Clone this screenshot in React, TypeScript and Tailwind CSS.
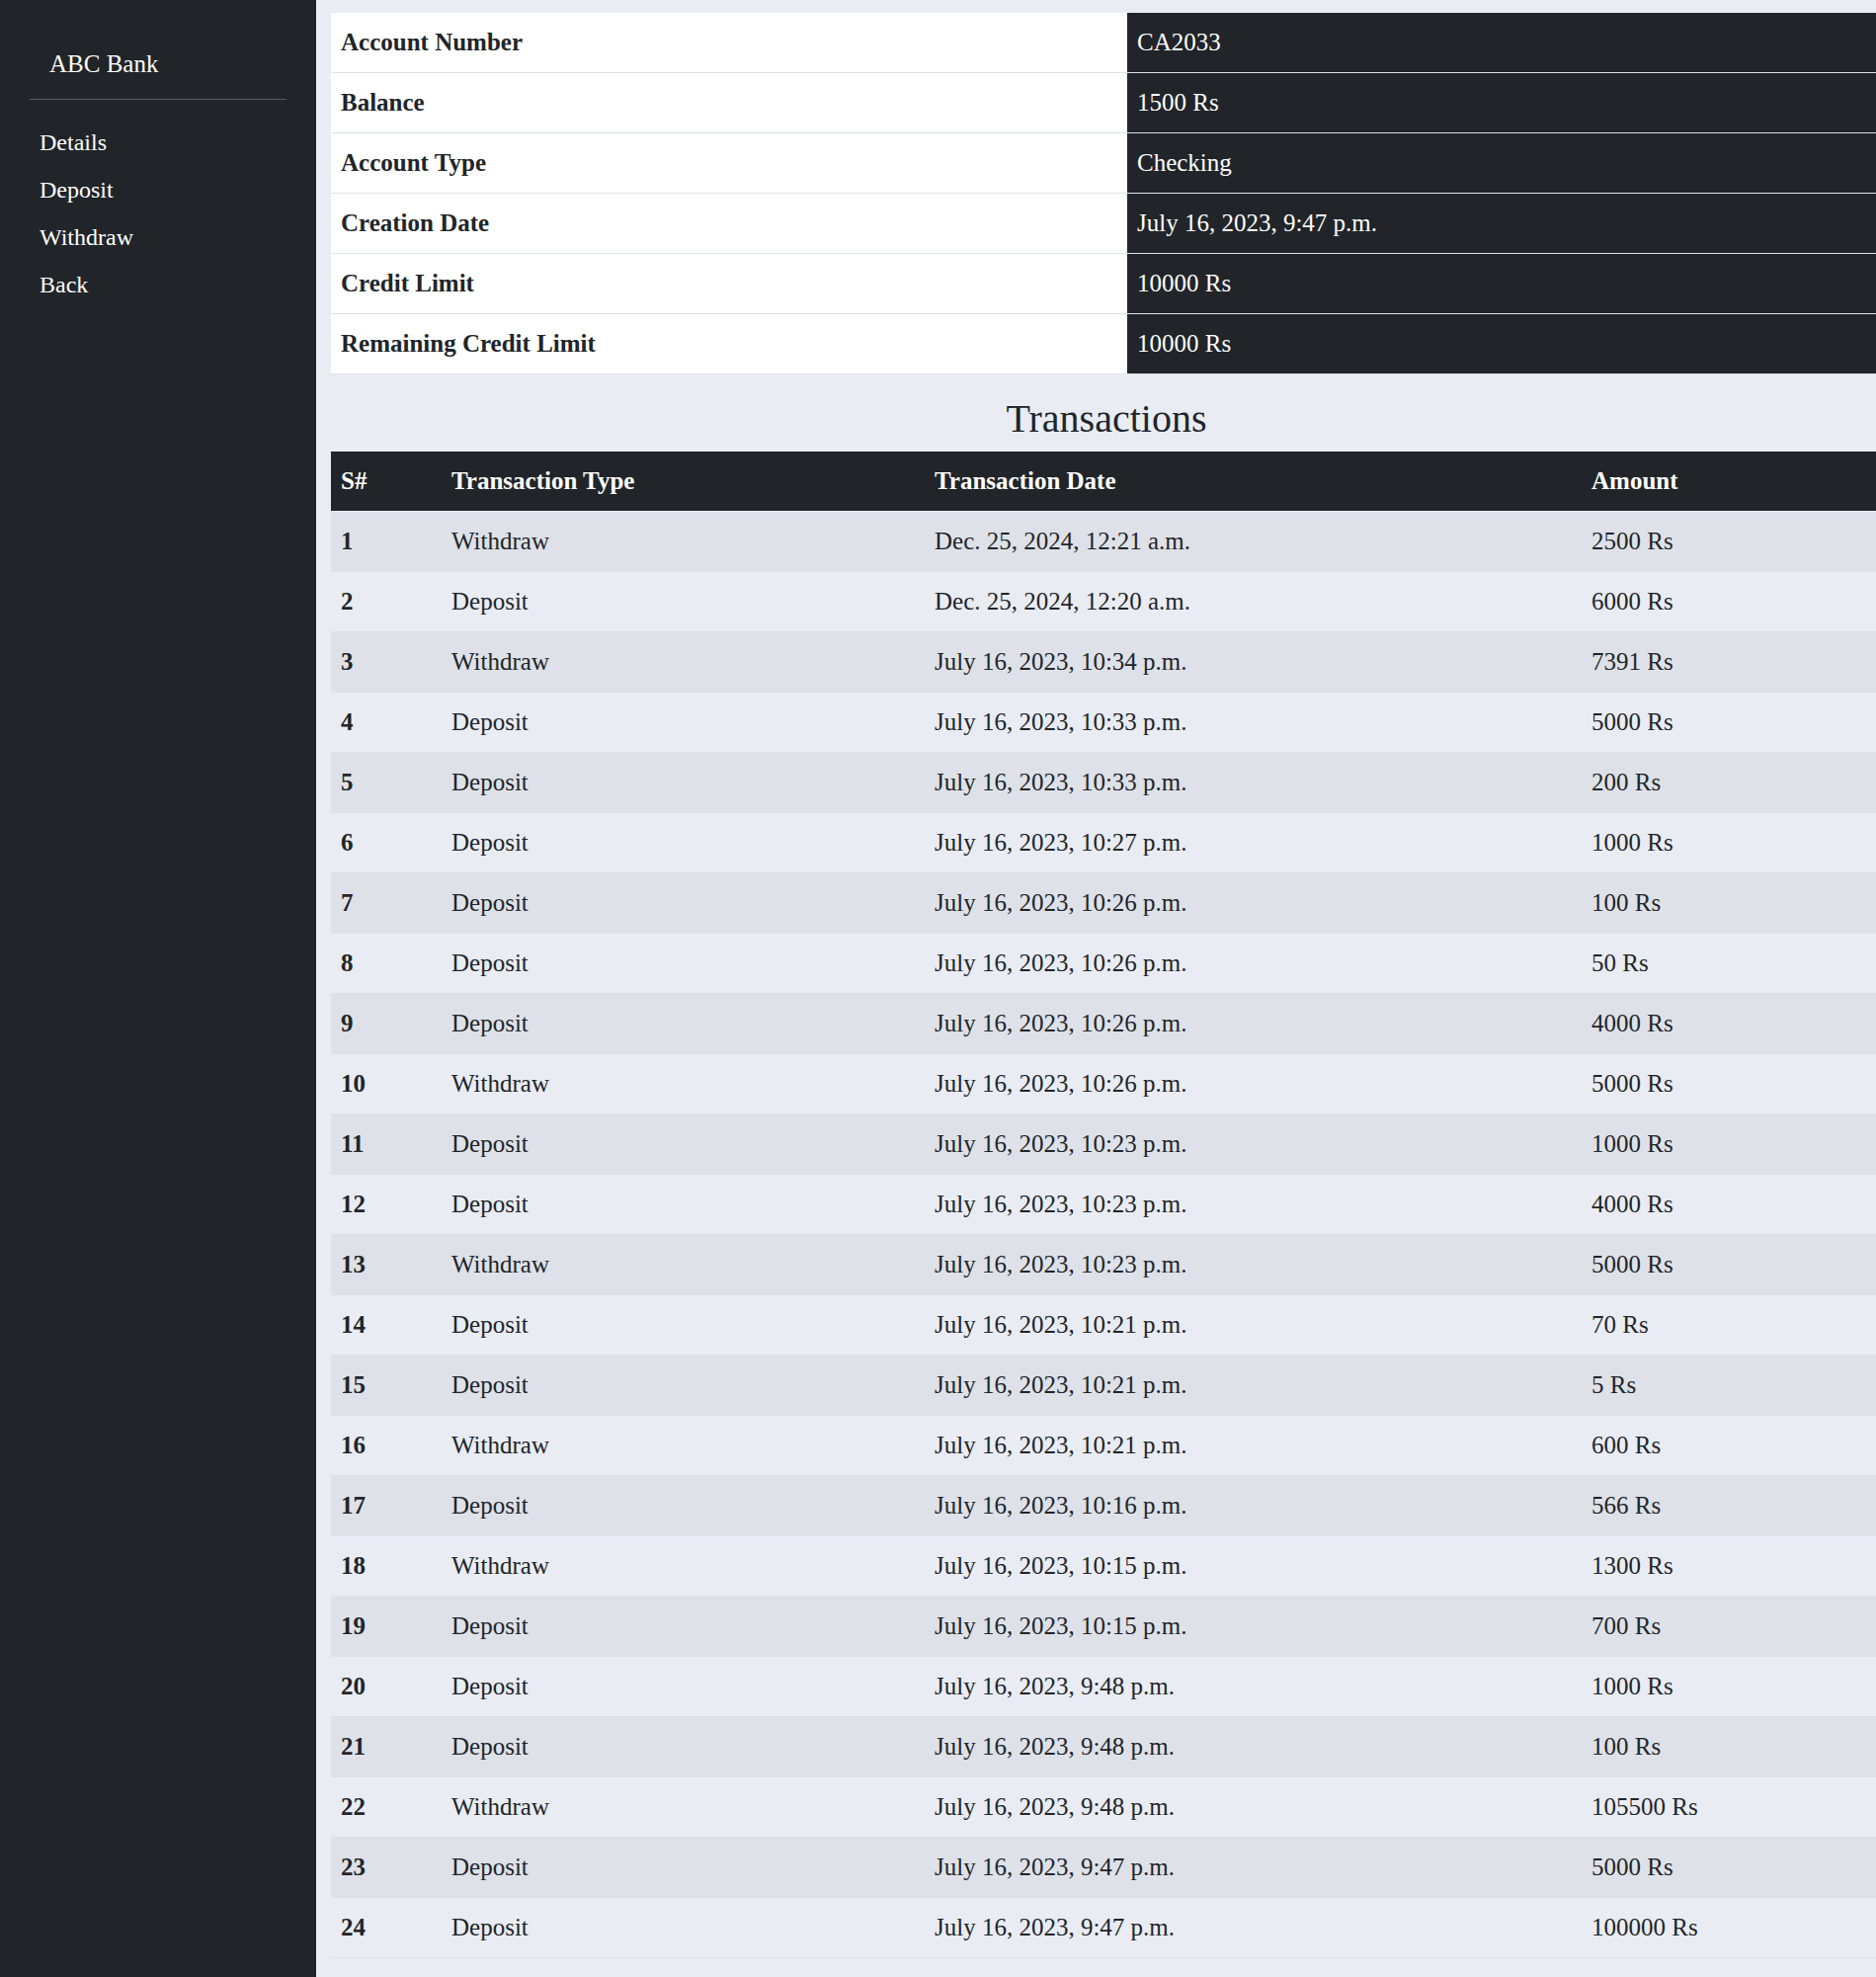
import React from 'react';

const details: [string, string][] = [
  ['Account Number', 'CA2033'],
  ['Balance', '1500 Rs'],
  ['Account Type', 'Checking'],
  ['Creation Date', 'July 16, 2023, 9:47 p.m.'],
  ['Credit Limit', '10000 Rs'],
  ['Remaining Credit Limit', '10000 Rs'],
];

const transactions: [string, string, string][] = [
  ['Withdraw', 'Dec. 25, 2024, 12:21 a.m.', '2500 Rs'],
  ['Deposit', 'Dec. 25, 2024, 12:20 a.m.', '6000 Rs'],
  ['Withdraw', 'July 16, 2023, 10:34 p.m.', '7391 Rs'],
  ['Deposit', 'July 16, 2023, 10:33 p.m.', '5000 Rs'],
  ['Deposit', 'July 16, 2023, 10:33 p.m.', '200 Rs'],
  ['Deposit', 'July 16, 2023, 10:27 p.m.', '1000 Rs'],
  ['Deposit', 'July 16, 2023, 10:26 p.m.', '100 Rs'],
  ['Deposit', 'July 16, 2023, 10:26 p.m.', '50 Rs'],
  ['Deposit', 'July 16, 2023, 10:26 p.m.', '4000 Rs'],
  ['Withdraw', 'July 16, 2023, 10:26 p.m.', '5000 Rs'],
  ['Deposit', 'July 16, 2023, 10:23 p.m.', '1000 Rs'],
  ['Deposit', 'July 16, 2023, 10:23 p.m.', '4000 Rs'],
  ['Withdraw', 'July 16, 2023, 10:23 p.m.', '5000 Rs'],
  ['Deposit', 'July 16, 2023, 10:21 p.m.', '70 Rs'],
  ['Deposit', 'July 16, 2023, 10:21 p.m.', '5 Rs'],
  ['Withdraw', 'July 16, 2023, 10:21 p.m.', '600 Rs'],
  ['Deposit', 'July 16, 2023, 10:16 p.m.', '566 Rs'],
  ['Withdraw', 'July 16, 2023, 10:15 p.m.', '1300 Rs'],
  ['Deposit', 'July 16, 2023, 10:15 p.m.', '700 Rs'],
  ['Deposit', 'July 16, 2023, 9:48 p.m.', '1000 Rs'],
  ['Deposit', 'July 16, 2023, 9:48 p.m.', '100 Rs'],
  ['Withdraw', 'July 16, 2023, 9:48 p.m.', '105500 Rs'],
  ['Deposit', 'July 16, 2023, 9:47 p.m.', '5000 Rs'],
  ['Deposit', 'July 16, 2023, 9:47 p.m.', '100000 Rs'],
];

const navLinks = ['Details', 'Deposit', 'Withdraw', 'Back'];

const Sidebar: React.FC = () => (
  <aside className="w-[320px] shrink-0 bg-[#212529] px-[30px] pt-[46px]">
    <div className="pl-5 text-[25px] leading-[37.5px] text-white">ABC Bank</div>
    <hr className="mt-[16px] border-0 border-t border-[#5a5d61]" />
    <ul className="mt-[19px]">
      {navLinks.map((link) => (
        <li key={link}>
          <a href="#" className="block px-[10px] py-[6px] text-[24px] leading-[36px] text-white">
            {link}
          </a>
        </li>
      ))}
    </ul>
  </aside>
);

export default function App() {
  return (
    <div className="flex min-h-screen w-full overflow-hidden font-['Liberation_Serif','Times_New_Roman',serif] text-[25px] text-[#212529]">
      <Sidebar />

      {/* Main content */}
      <main className="flex-1 overflow-hidden bg-[#e9ecf3] pl-[15px] pt-[13px]">
        <div className="w-[1570px]">
          {/* Account details */}
          <table className="w-full table-fixed border-collapse">
            <colgroup>
              <col className="w-[806px]" />
              <col />
            </colgroup>
            <tbody>
              {details.map(([label, value]) => (
                <tr key={label}>
                  <th className="border-b border-[#dee2e6] bg-white px-[10px] py-[11px] text-left font-bold leading-[38px]">
                    {label}
                  </th>
                  <td className="border-b border-[#dee2e6] bg-[#212529] px-[10px] py-[11px] leading-[38px] text-white">
                    {value}
                  </td>
                </tr>
              ))}
            </tbody>
          </table>

          <h2 className="mt-[21px] mb-[9px] text-center text-[40px] font-normal leading-[48px]">Transactions</h2>

          {/* Transactions */}
          <table className="w-full table-fixed border-collapse">
            <colgroup>
              <col className="w-[112px]" />
              <col className="w-[489px]" />
              <col className="w-[665px]" />
              <col />
            </colgroup>
            <thead>
              <tr className="bg-[#212529] text-white">
                <th className="border-b border-[#e9ecef] px-[10px] py-[11px] text-left font-bold leading-[38px]">S#</th>
                <th className="border-b border-[#e9ecef] px-[10px] py-[11px] text-left font-bold leading-[38px]">Transaction Type</th>
                <th className="border-b border-[#e9ecef] px-[10px] py-[11px] text-left font-bold leading-[38px]">Transaction Date</th>
                <th className="border-b border-[#e9ecef] px-[10px] py-[11px] text-left font-bold leading-[38px]">Amount</th>
              </tr>
            </thead>
            <tbody>
              {transactions.map(([type, date, amount], i) => (
                <tr key={i} className="odd:bg-[#dee1e8]">
                  <th className="border-b border-[#dee2e6] px-[10px] py-[11px] text-left font-bold leading-[38px]">{i + 1}</th>
                  <td className="border-b border-[#dee2e6] px-[10px] py-[11px] leading-[38px]">{type}</td>
                  <td className="border-b border-[#dee2e6] px-[10px] py-[11px] leading-[38px]">{date}</td>
                  <td className="border-b border-[#dee2e6] px-[10px] py-[11px] leading-[38px]">{amount}</td>
                </tr>
              ))}
            </tbody>
          </table>
        </div>
      </main>
    </div>
  );
}
